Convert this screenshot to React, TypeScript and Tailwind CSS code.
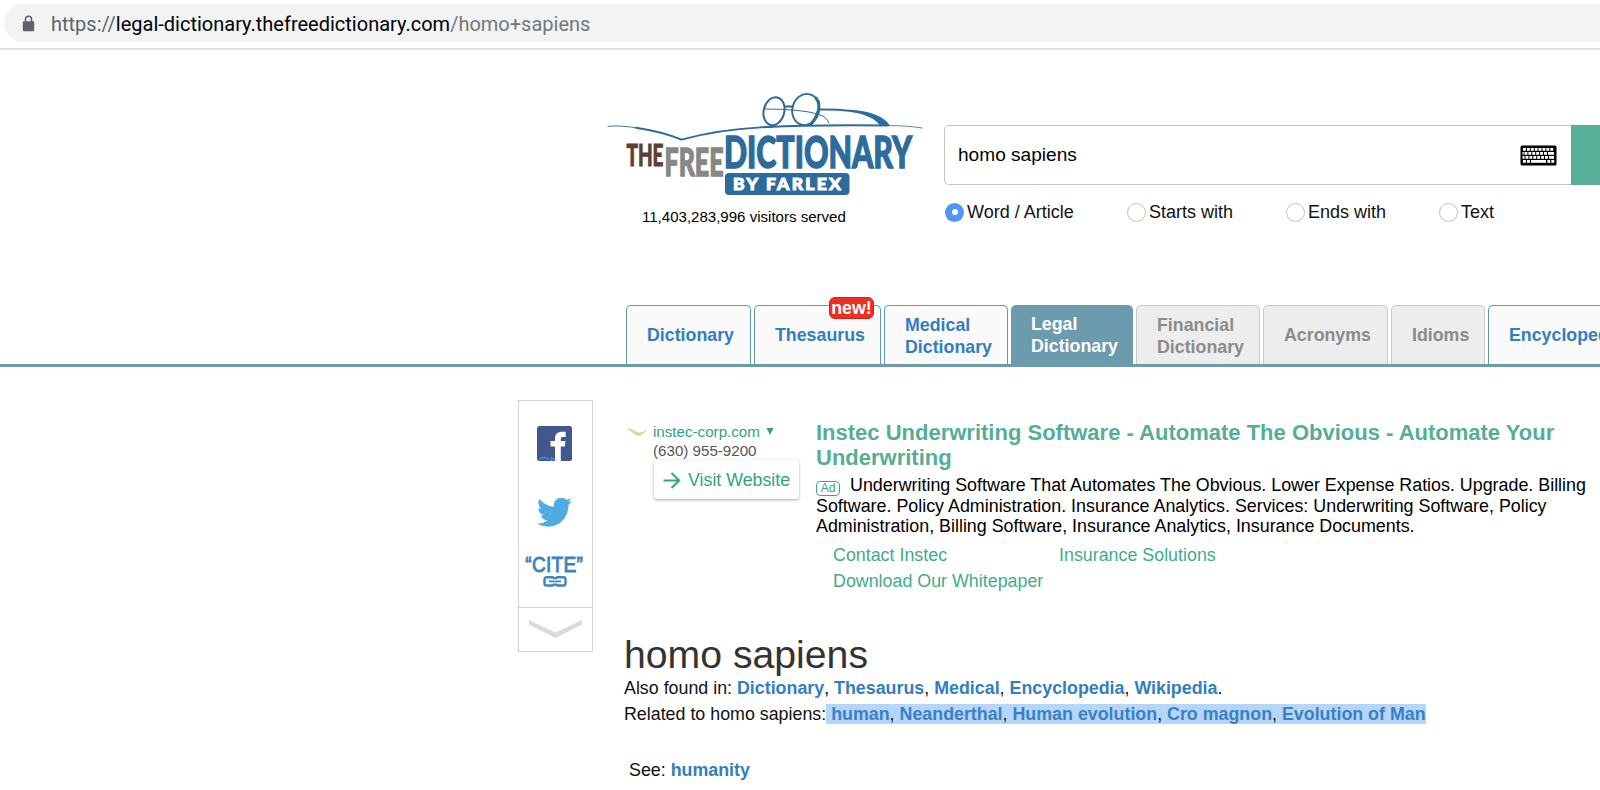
import { clsx } from "clsx"

type Tab = {
  label: string[]
  kind: "link" | "active" | "muted"
  box: string
  isNew?: boolean
}

const TABS: Tab[] = [
  { label: ["Dictionary"], kind: "link", box: "w-[125px] mr-[3px] pl-5" },
  { label: ["Thesaurus"], kind: "link", box: "w-[127px] mr-[3px] pl-5", isNew: true },
  { label: ["Medical", "Dictionary"], kind: "link", box: "w-[124px] mr-[3px] pl-5 pt-[2px]" },
  { label: ["Legal", "Dictionary"], kind: "active", box: "w-[122px] mr-[3px] pl-[19px] pb-px" },
  { label: ["Financial", "Dictionary"], kind: "muted", box: "w-[124px] mr-[3px] pl-5 pt-[2px]" },
  { label: ["Acronyms"], kind: "muted", box: "w-[125px] mr-[3px] pl-5" },
  { label: ["Idioms"], kind: "muted", box: "w-[94px] mr-[3px] pl-5" },
  { label: ["Encyclopedia"], kind: "link", box: "w-[150px] pl-5" },
]

const SEARCH_MODES = [
  { label: "Word / Article", width: "w-[182px]" },
  { label: "Starts with", width: "w-[159px]" },
  { label: "Ends with", width: "w-[153px]" },
  { label: "Text", width: "w-[60px]" },
]

const FOUND_IN = ["Dictionary", "Thesaurus", "Medical", "Encyclopedia", "Wikipedia"]
const RELATED = ["human", "Neanderthal", "Human evolution", "Cro magnon", "Evolution of Man"]

export default function App() {
  return (
    <div className="h-[790px] w-[1600px] overflow-hidden bg-white font-['Liberation_Sans',Arial,sans-serif] text-black">
      <AddressBar />
      <header className="flex h-[255px]">
        <div className="ml-[605px] w-[339px] pt-[35px]">
          <Logo />
          <div className="ml-[37px] mt-[5px] text-[15.05px] leading-[23px] whitespace-nowrap">
            11,403,283,996 visitors served
          </div>
        </div>
        <SearchForm />
      </header>
      <Tabs />
      <main className="flex">
        <ShareBar />
        <div className="ml-[31px] w-[976px] pt-[54px]">
          <Ad />
          <Article />
        </div>
      </main>
    </div>
  )
}

function AddressBar() {
  return (
    <div className="h-[50px] border-b-2 border-[#e2e3e4] pt-1">
      <div className="ml-1 flex h-[38px] items-center rounded-l-full bg-[#f1f3f4] pl-[18px]">
        <svg width="13" height="17" viewBox="0 0 13 17" className="shrink-0">
          <path d="M3.5 7V4.3a3 3 0 0 1 6 0V7" fill="none" stroke="#5f6368" strokeWidth="1.6" />
          <rect x="0.8" y="6.2" width="11.4" height="10" rx="1.2" fill="#5f6368" />
        </svg>
        <div className="ml-4 pt-[2px] font-[Roboto,sans-serif] text-[20px] leading-6 whitespace-nowrap text-[#73787c]">
          <span className="text-[#5f6368]">https://</span>
          <span className="text-black">legal-dictionary.thefreedictionary.com</span>
          <span>/homo+sapiens</span>
        </div>
      </div>
    </div>
  )
}

function Logo() {
  return (
    <svg width="320" height="115" viewBox="605 85 320 115" className="block">
      <g fill="none" stroke="#2c6b9c" strokeLinecap="round">
        <path d="M608 126.3Q622 125 640 128.5" strokeWidth="0.9" />
        <path d="M636 127.7Q664 132 681.5 139.7Q722 128.5 772 126.8" strokeWidth="1.9" />
        <path d="M766 127Q815 124.5 888 125.5" strokeWidth="1.9" />
        <path d="M886 125.5Q908 125.5 922 128" strokeWidth="0.8" />
        <ellipse cx="774" cy="111.2" rx="10.3" ry="14.2" strokeWidth="2" transform="rotate(14 774 111.2)" />
        <ellipse cx="805.7" cy="109.5" rx="13.3" ry="15.8" strokeWidth="1.9" transform="rotate(16 805.7 109.5)" />
        <path d="M816 98Q821 104 817.500 113Q815 120 811 124" strokeWidth="3" />
        <path d="M785 106.5H793" strokeWidth="2" />
        <path d="M765 109Q800 109 818 114Q827 117 829 123" strokeWidth="1" />
        <path d="M820 109.5Q850 109 868 114" strokeWidth="2" />
      </g>
      <path d="M850 109.8Q882 112 890 126H880Q875 116 850 111.5Z" fill="#2c6b9c" />
      <g fontFamily="Lato, sans-serif" fontWeight="900">
        <text
          x="626.5"
          y="165.500"
          fontSize="29.500"
          textLength="37"
          lengthAdjust="spacingAndGlyphs"
          fill="#5d3f37"
          stroke="#5d3f37"
          strokeWidth="0.900"
        >
          THE
        </text>
        <text
          x="664.5"
          y="175.500"
          fontSize="38"
          textLength="59"
          lengthAdjust="spacingAndGlyphs"
          fill="#878786"
          stroke="#878786"
          strokeWidth="1.300"
        >
          FREE
        </text>
        <text
          x="724"
          y="167.700"
          fontSize="43.500"
          textLength="188"
          lengthAdjust="spacingAndGlyphs"
          fill="#2c6b9c"
          stroke="#2c6b9c"
          strokeWidth="1.400"
        >
          DICTIONARY
        </text>
      </g>
      <rect x="725" y="173" width="124.5" height="22" rx="4" fill="#2c6b9c" />
      <text
        x="733"
        y="190"
        fontFamily="Lato, sans-serif"
        fontWeight="900"
        fontSize="17.5"
        textLength="108"
        lengthAdjust="spacing"
        fill="#fff"
        stroke="#fff"
        strokeWidth="1"
      >
        BY FARLEX
      </text>
    </svg>
  )
}

function SearchForm() {
  return (
    <div className="w-[656px] pt-[75px]">
      <div className="flex h-[60px]">
        <div className="flex w-[627px] items-center justify-between rounded-l-[5px] border border-r-0 border-[#c4c4c4] pr-[14px] pl-[13px]">
          <span className="text-[19.1px] leading-6">homo sapiens</span>
          <Keyboard />
        </div>
        <div className="flex-1 bg-[#58ae97]" />
      </div>
      <div className="mt-[17px] flex">
        {SEARCH_MODES.map((mode, i) => (
          <label key={mode.label} className={clsx("flex items-center", mode.width)}>
            <span
              className={clsx(
                "ml-[1px] flex size-[19px] items-center justify-center rounded-full",
                i === 0 ? "bg-[#4f96f6]" : "border border-[#c2c2c2] bg-white",
              )}
            >
              {i === 0 ? <span className="size-[6px] rounded-full bg-white" /> : null}
            </span>
            <span className="ml-[3px] text-[18px] leading-5 whitespace-nowrap text-[#111]">{mode.label}</span>
          </label>
        ))}
      </div>
    </div>
  )
}

function Keyboard() {
  const keys = [
    [3, 6.9, 10.8, 14.7, 18.6, 22.5, 26.4, 30.3],
    [4.5, 8.4, 12.3, 16.2, 20.1, 24],
    [5.5, 9.4, 13.3, 17.2, 21.1, 25],
  ]
  return (
    <svg width="37" height="21" viewBox="0 0 37 21">
      <rect x="0.5" y="0.5" width="36" height="20" rx="1.5" fill="#000" />
      <g fill="#fff">
        {keys.map((row, r) => row.map((x) => <rect key={`${r}-${x}`} x={x} y={3 + r * 4} width="2.9" height="2.8" />))}
        <rect x="2.5" y="7" width="1.2" height="2.8" />
        <rect x="28" y="7" width="6" height="2.8" />
        <rect x="2.5" y="11" width="2" height="2.8" />
        <rect x="29" y="11" width="5" height="2.8" />
        <rect x="3" y="15" width="2.9" height="2.8" />
        <rect x="7" y="15" width="2.9" height="2.8" />
        <rect x="11" y="15" width="15" height="2.8" />
        <rect x="27.3" y="15" width="2.9" height="2.8" />
        <rect x="31.3" y="15" width="2.9" height="2.8" />
      </g>
    </svg>
  )
}

function Tabs() {
  return (
    <nav className="flex h-[62px] border-b-[3px] border-[#6c9bae] pl-[626px]">
      {TABS.map((tab) => (
        <div
          key={tab.label.join(" ")}
          className={clsx(
            "relative flex shrink-0 flex-col justify-center rounded-t-[5px] border border-b-0 text-[17.8px] leading-[22px] font-bold",
            tab.box,
            tab.kind === "link" && "border-[#5f9bb0] bg-[#fafafa] text-[#327ec0]",
            tab.kind === "active" && "border-[#6c9bae] bg-[#6c9bae] text-white",
            tab.kind === "muted" && "border-[#c8c8c8] bg-[#ededed] text-[#8b8b8b]",
          )}
        >
          {tab.label.map((line) => (
            <span key={line}>{line}</span>
          ))}
          {tab.isNew ? (
            <span className="absolute -top-[9px] right-[6px] h-[22px] w-[45px] rounded-[6px] border border-[#d8201a] bg-[#ee2f24] text-center text-[17.8px] leading-[20px] text-white">
              new!
            </span>
          ) : null}
        </div>
      ))}
    </nav>
  )
}

function ShareBar() {
  return (
    <aside className="mt-[33px] ml-[518px] h-[252px] w-[75px] shrink-0 border border-[#d3d3d3]">
      <div className="flex h-[207px] flex-col items-center border-b border-[#d3d3d3] pt-[25px] pr-[3px]">
        <svg width="35" height="35" viewBox="0 0 35 35">
          <rect width="35" height="35" rx="2.5" fill="#43578f" />
          <path
            d="M18 35V20.5H13.5V15H18V12.5C18 8 20.5 5.7 25 5.7H28.7V11H26C24.3 11 23.8 11.8 23.8 13.3V15H28.5L27.8 20.5H23.8V35Z"
            fill="#fff"
          />
          <path d="M2 33.5Q7 29.5 12 33.5M14.500 31V35M16 32L18 35" fill="none" stroke="#3f8fd0" strokeWidth="1.6" />
        </svg>
        <svg width="35" height="29" viewBox="0 2.5 24 19.5" preserveAspectRatio="none" className="mt-[37px]">
          <path
            fill="#50abe4"
            d="M23.953 4.570a10 10 0 01-2.825.775 4.958 4.958 0 002.163-2.723c-.951.555-2.005.959-3.127 1.184a4.920 4.920 0 00-8.384 4.482C7.690 8.095 4.067 6.130 1.640 3.162a4.822 4.822 0 00-.666 2.475c0 1.710.870 3.213 2.188 4.096a4.904 4.904 0 01-2.228-.616v.060a4.923 4.923 0 003.946 4.827 4.996 4.996 0 01-2.212.085 4.936 4.936 0 004.604 3.417 9.867 9.867 0 01-6.102 2.105c-.390 0-.779-.023-1.170-.067a13.995 13.995 0 007.557 2.209c9.053 0 13.998-7.496 13.998-13.985 0-.210 0-.420-.015-.630A9.935 9.935 0 0024 4.590z"
          />
        </svg>
        <div className="mt-[26px] origin-center scale-x-[0.87] text-[22px] leading-6 tracking-[0.3px] whitespace-nowrap text-[#3b82be] [-webkit-text-stroke:0.9px_#3b82be]">
          “CITE”
        </div>
        <svg width="24" height="11" viewBox="0 0 24 11" className="-mt-px ml-[2px] shrink-0">
          <g fill="none" stroke="#3b86bb" strokeWidth="2.4">
            <path d="M11 3.2V3a1.7 1.7 0 0 0-1.7-1.7H3.5A2 2 0 0 0 1.5 3.3V7.5A2 2 0 0 0 3.5 9.5H9.3A1.7 1.7 0 0 0 11 7.800V7.600" />
            <path d="M13 3.2V3a1.7 1.7 0 0 1 1.7-1.7H20.5A2 2 0 0 1 22.5 3.3V7.5A2 2 0 0 1 20.5 9.5H14.7A1.7 1.7 0 0 1 13 7.800V7.600" />
          </g>
          <path d="M6 5.4H18" stroke="#3b86bb" strokeWidth="1.8" />
        </svg>
      </div>
      <svg width="55" height="20" viewBox="0 0 55 20" className="mt-[11px] ml-[9px] block">
        <path d="M1 1L27.5 13.5L54 1V5.500L27.5 19L1 5.500Z" fill="#dcdad6" />
      </svg>
    </aside>
  )
}

function Ad() {
  return (
    <section className="flex h-[197px]">
      <svg width="22" height="9" viewBox="0 0 22 9" className="mt-[6px] ml-[2px] shrink-0">
        <path d="M0 0.5Q6 2 12 5.5Q16 6 21.5 2.5Q16 9.5 11.5 8.8Q7 6.500 0 0.5Z" fill="#d3dc98" />
      </svg>
      <div className="ml-[5px] w-[163px] shrink-0 text-[15.15px] leading-[19px]">
        <div className="flex h-5 items-center text-[#33a382]">
          instec-corp.com
          <svg width="8" height="7" viewBox="0 0 8 7" className="ml-[6px]">
            <path d="M0.5 0H7.5L4 7Z" fill="#33a382" />
          </svg>
        </div>
        <div className="text-[#555]">(630) 955-9200</div>
        <button
          type="button"
          className="ml-px flex h-[39px] w-[145px] items-center rounded-[3px] bg-white pt-px pl-[9px] text-[17.8px] whitespace-nowrap text-[#33a382] shadow-[0_1px_3px_rgba(0,0,0,0.35)]"
        >
          <svg width="18" height="17" viewBox="0 0 18 17" className="mr-[7px]">
            <path d="M0.5 8.5H16M8.5 1L16.2 8.5L8.5 16" fill="none" stroke="#33a382" strokeWidth="2" />
          </svg>
          Visit Website
        </button>
      </div>
      <div className="w-[784px]">
        <h2 className="text-[22px] leading-[24.5px] font-bold text-[#55ae95]">
          Instec Underwriting Software - Automate The Obvious - Automate Your
          <br />
          Underwriting
        </h2>
        <p className="mt-[5px] text-[17.87px] leading-[20.5px] whitespace-nowrap">
          <span className="-my-1 mr-[10px] inline-flex h-[15px] w-6 items-center justify-center rounded-[4px] border border-[#3fa888] align-[-1px] text-[12px] leading-none text-[#3fa888]">
            Ad
          </span>
          Underwriting Software That Automates The Obvious. Lower Expense Ratios. Upgrade. Billing
          <br />
          Software. Policy Administration. Insurance Analytics. Services: Underwriting Software, Policy
          <br />
          Administration, Billing Software, Insurance Analytics, Insurance Documents.
        </p>
        <div className="mt-[5px] ml-[17px] grid grid-cols-[226px_auto] text-[17.85px] leading-[26px] text-[#43ab8b]">
          <a>Contact Instec</a>
          <a>Insurance Solutions</a>
          <a>Download Our Whitepaper</a>
        </div>
      </div>
    </section>
  )
}

function Links({ words }: { words: string[] }) {
  return (
    <>
      {words.map((word, i) => (
        <span key={word}>
          {i > 0 ? ", " : ""}
          <a className="font-bold text-[#327ebf]">{word}</a>
        </span>
      ))}
    </>
  )
}

function Article() {
  return (
    <article className="text-[17.83px] leading-[26px] whitespace-nowrap text-[#111]">
      <h1 className="pt-[12px] text-[39.2px] leading-[50px] text-[#333]">homo sapiens</h1>
      <p className="-mt-[5px]">
        Also found in: <Links words={FOUND_IN} />.
      </p>
      <p>
        Related to homo sapiens:
        <span className="bg-[#b5d5fb] [&_a]:text-[#3a80c2]">
          {" "}
          <Links words={RELATED} />
        </span>
      </p>
      <p className="mt-[30px] ml-[5px]">
        See: <a className="font-bold text-[#327ebf]">humanity</a>
      </p>
    </article>
  )
}
